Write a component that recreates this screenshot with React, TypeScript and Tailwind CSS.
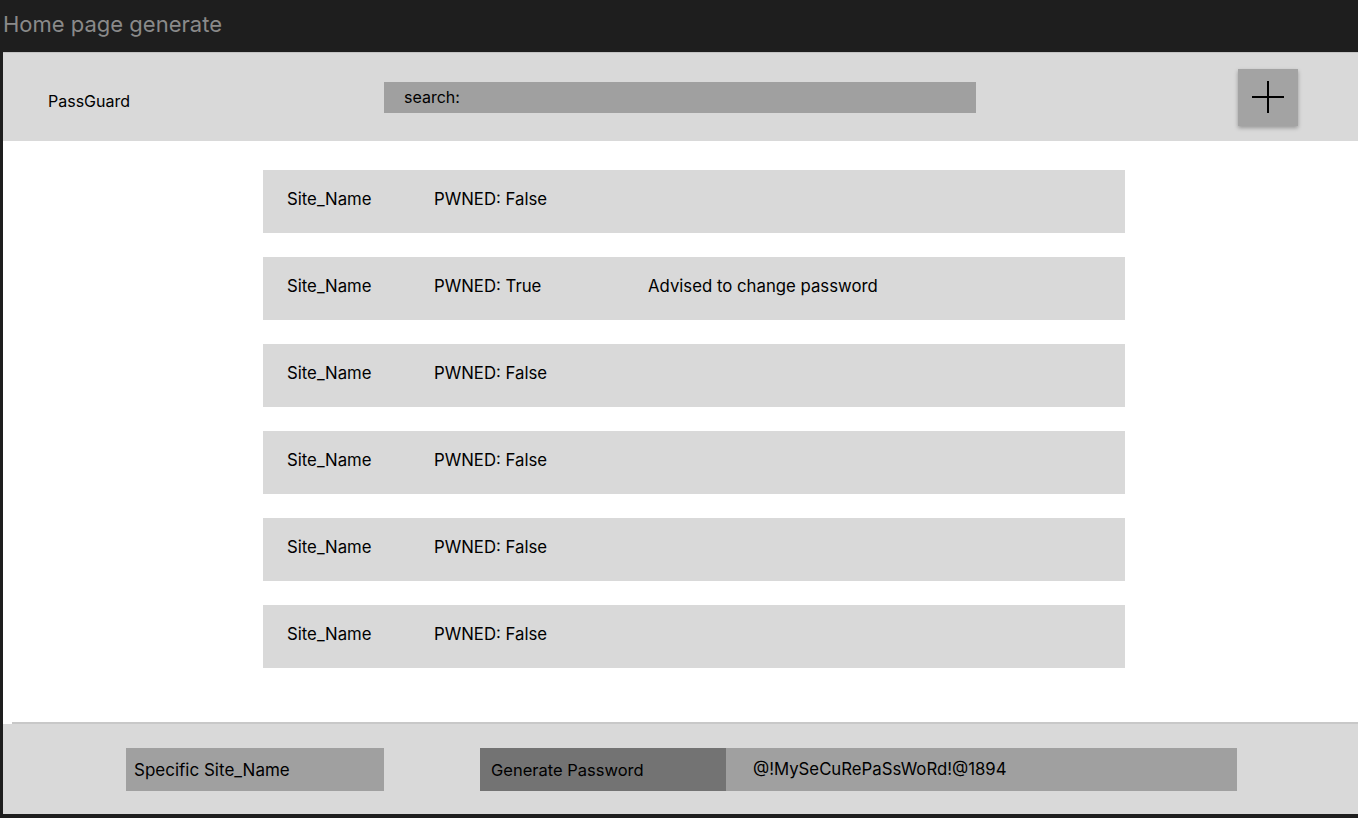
import React from 'react';

const rows = [
  { site: 'Site_Name', pwned: false },
  { site: 'Site_Name', pwned: true },
  { site: 'Site_Name', pwned: false },
  { site: 'Site_Name', pwned: false },
  { site: 'Site_Name', pwned: false },
  { site: 'Site_Name', pwned: false },
];

const App: React.FC = () => {
  return (
    <div className="flex flex-col h-[818px] w-[1358px] bg-[#1e1e1e] text-black overflow-hidden font-['Inter',sans-serif]">
      {/* Title bar */}
      <div className="h-[52px] shrink-0 flex items-center pl-[3px] pb-[4px]">
        <span className="text-[22px] text-[#8a8a8a] leading-none">Home page generate</span>
      </div>

      {/* Frame */}
      <div className="flex-1 flex flex-col ml-[3px] mb-[4px] bg-white">
        {/* Header */}
        <header className="h-[89px] shrink-0 bg-[#d9d9d9] border-t border-[#c4c4c4] flex items-center">
          <div className="w-[381px] pl-[45px] pt-[8px] text-base">PassGuard</div>
          <div className="w-[592px] h-[31px] bg-[#a0a0a0] flex items-center pl-[20px] text-base">
            search:
          </div>
          <div className="flex-1 flex justify-end pr-[60px]">
            <button className="w-[60px] h-[57px] bg-[#a3a3a3] shadow-[0_2px_4px_rgba(0,0,0,0.3)] flex items-center justify-center">
              <svg width="34" height="34" viewBox="0 0 34 34" fill="none" stroke="#000" strokeWidth={2}>
                <path d="M17 1v32M1 17h32" />
              </svg>
            </button>
          </div>
        </header>

        {/* List */}
        <main className="flex-1 flex flex-col gap-[24px] pt-[29px] pl-[260px]">
          {rows.map((r, i) => (
            <div key={i} className="w-[862px] h-[63px] bg-[#d9d9d9] flex items-center pl-[24px] pb-[3px] text-[16.75px]">
              <span className="w-[147px]">{r.site}</span>
              <span className="w-[214px]">PWNED: {r.pwned ? 'True' : 'False'}</span>
              {r.pwned && <span>Advised to change password</span>}
            </div>
          ))}
        </main>

        {/* Footer */}
        <footer className="h-[92px] shrink-0 flex flex-col">
          <div className="h-[2px] ml-[9px] bg-[#c8c8c8]" />
          <div className="flex-1 bg-[#d9d9d9] flex items-center pl-[123px]">
            <div className="w-[258px] h-[43px] bg-[#a0a0a0] flex items-center pl-[8px] pt-[3px] text-[17px]">
              Specific Site_Name
            </div>
            <div className="ml-[96px] w-[246px] h-[43px] bg-[#737373] flex items-center pl-[11px] pt-[2px] text-[16.5px]">
              Generate Password
            </div>
            <div className="w-[511px] h-[43px] bg-[#a0a0a0] flex items-center pl-[27px] pt-[2px] text-[16.75px]">
              @!MySeCuRePaSsWoRd!@1894
            </div>
          </div>
        </footer>
      </div>
    </div>
  );
};

export default App;
